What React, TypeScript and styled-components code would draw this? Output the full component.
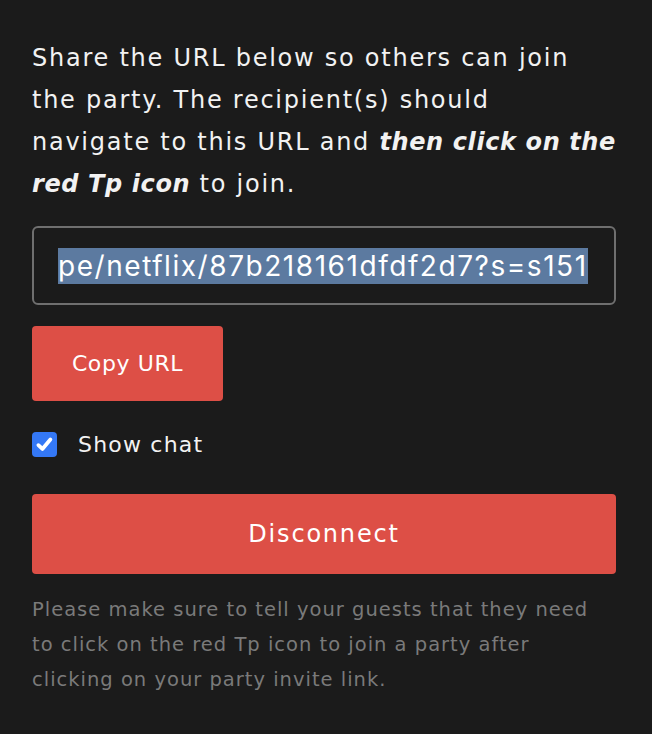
import React from "react";
import styled, { createGlobalStyle } from "styled-components";

const Global = createGlobalStyle`
  html, body { margin: 0; padding: 0; background: #1b1b1b; }
  body { font-family: "DejaVu Sans", "Open Sans", sans-serif; }
`;

const Panel = styled.div`
  display: flex;
  flex-direction: column;
  align-items: flex-start;
  padding: 37px 36px 0 32px;
  width: 584px;
  background: #1b1b1b;
`;

const Intro = styled.p`
  margin: 0;
  color: #f2f2f2;
  font-size: 24px;
  line-height: 42px;
  letter-spacing: 1.75px;
  white-space: nowrap;
  b {
    font-style: italic;
    font-weight: 700;
    letter-spacing: 0.6px;
  }
`;

const UrlBox = styled.div`
  margin-top: 21px;
  width: 584px;
  height: 79px;
  box-sizing: border-box;
  border: 2px solid #6f6f6f;
  border-radius: 6px;
  display: flex;
  align-items: center;
  padding: 0 24px;
  overflow: hidden;
  white-space: nowrap;
`;

const Selected = styled.span`
  background: #5c7aa0;
  color: #ffffff;
  font-family: Inter, Roboto, sans-serif;
  font-size: 28px;
  letter-spacing: 1.55px;
  line-height: 36px;
`;

const Button = styled.button<{ $wide?: boolean }>`
  border: none;
  border-radius: 4px;
  background: #dd4f46;
  color: #ffffff;
  font-family: "DejaVu Sans", "Open Sans", sans-serif;
  font-size: ${(p) => (p.$wide ? "24px" : "22px")};
  letter-spacing: ${(p) => (p.$wide ? "1.8px" : "0.6px")};
  font-weight: 400;
  width: ${(p) => (p.$wide ? "584px" : "191px")};
  height: ${(p) => (p.$wide ? "80px" : "75px")};
  margin-top: ${(p) => (p.$wide ? "37px" : "21px")};
  padding: 0;
  cursor: pointer;
`;

const CheckRow = styled.label`
  margin-top: 31px;
  display: flex;
  align-items: center;
  gap: 21px;
  color: #f2f2f2;
  font-size: 22px;
  letter-spacing: 1.2px;
  height: 25px;
`;

const Box = styled.span`
  width: 25px;
  height: 25px;
  border-radius: 4px;
  background: #3478f6;
  display: flex;
  align-items: center;
  justify-content: center;
`;

const Note = styled.p`
  margin: 18px 0 0;
  color: #7a7a7a;
  font-size: 19.5px;
  line-height: 35px;
  letter-spacing: 1px;
  white-space: nowrap;
`;

export default function App() {
  return (
    <>
      <Global />
      <Panel>
        <Intro>
          Share the URL below so others can join
          <br />
          the party. The recipient(s) should
          <br />
          navigate to this URL and <b>then click on the</b>
          <br />
          <b>red Tp icon</b> to join.
        </Intro>
        <UrlBox>
          <Selected>pe/netflix/87b218161dfdf2d7?s=s151</Selected>
        </UrlBox>
        <Button>Copy URL</Button>
        <CheckRow>
          <Box>
            <svg width="21" height="21" viewBox="0 0 20 20">
              <path
                d="M4.2 10.6 L8 14.2 L15.6 5.2"
                fill="none"
                stroke="#fff"
                strokeWidth="3.6"
                strokeLinecap="round"
                strokeLinejoin="round"
              />
            </svg>
          </Box>
          Show chat
        </CheckRow>
        <Button $wide>Disconnect</Button>
        <Note>
          Please make sure to tell your guests that they need
          <br />
          to click on the red Tp icon to join a party after
          <br />
          clicking on your party invite link.
        </Note>
      </Panel>
    </>
  );
}
